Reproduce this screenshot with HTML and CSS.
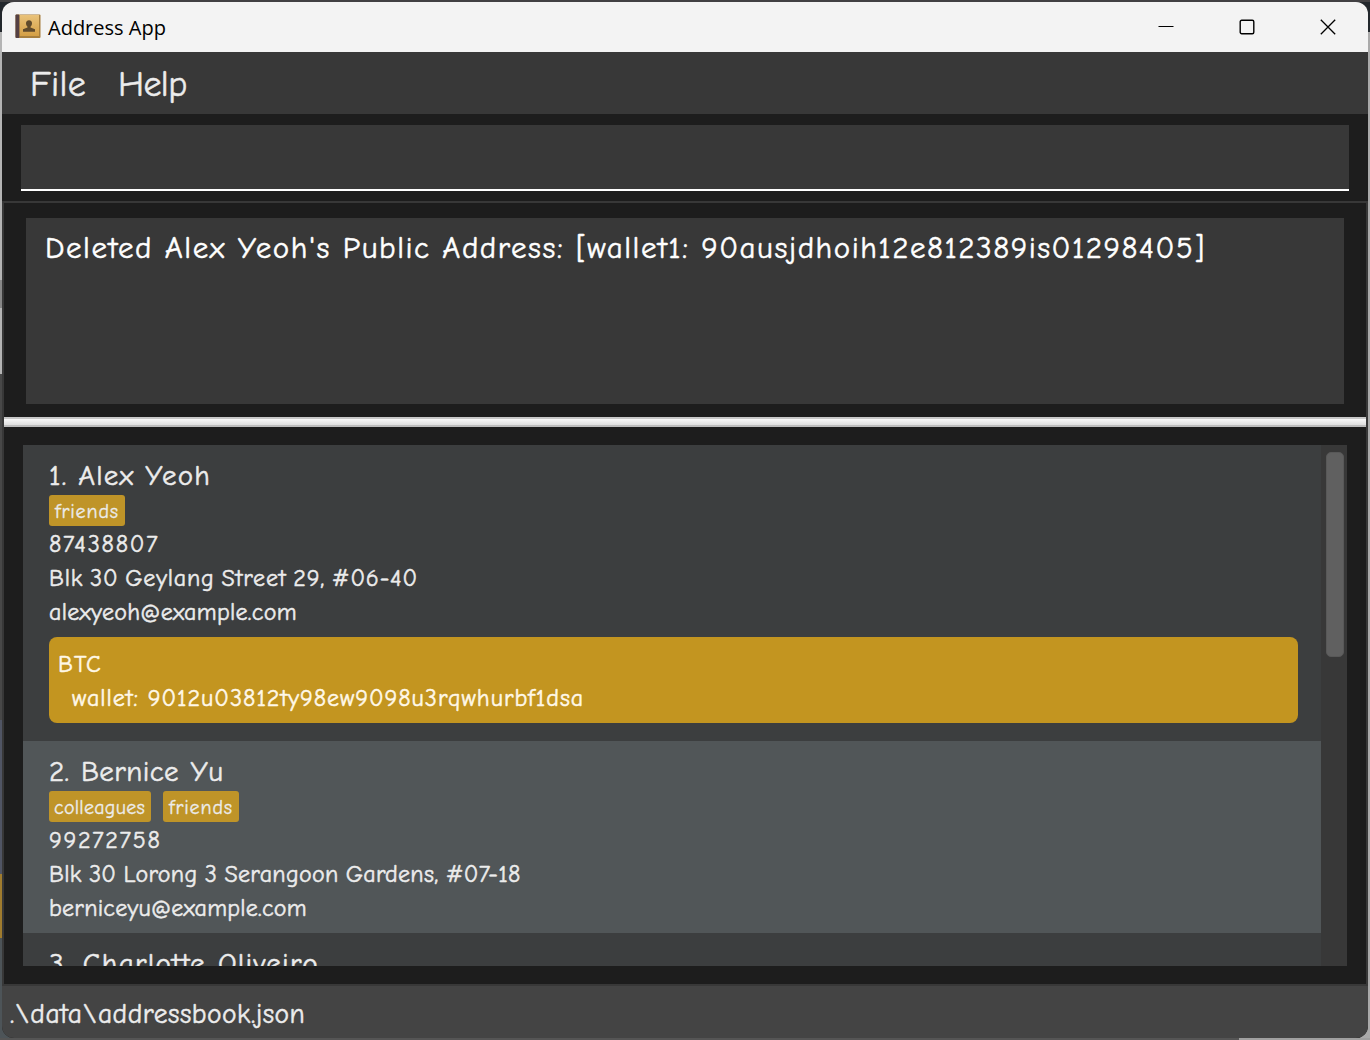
FILE: index.html
```html
<!DOCTYPE html>
<html lang="en">
<head>
<meta charset="utf-8">
<title>Address App</title>
<link rel="stylesheet" href="styles.css">
</head>
<body>
<div class="window">
  <header class="titlebar">
    <svg class="app-icon" width="26" height="25" viewBox="0 0 26 25">
      <defs><linearGradient id="cover" x1="0" y1="0" x2="0" y2="1"><stop offset="0" stop-color="#e9c27a"/><stop offset="1" stop-color="#d49f45"/></linearGradient></defs>
      <rect x="0.5" y="0.5" width="25" height="23.5" rx="1" fill="#a77f3e"/>
      <rect x="4.5" y="1" width="19.5" height="21" fill="url(#cover)"/>
      <rect x="0.5" y="0.5" width="3.8" height="23.5" rx="1" fill="#544044"/>
      <path d="M14 6.200c2 0 3 1.300 3 3.100 0 1.500-.6 2.700-1.500 3.400v.8l4.500 1.700v2.600H8v-2.600l4.500-1.700v-.8C11.600 12 11 10.800 11 9.300c0-1.800 1-3.100 3-3.100z" fill="#5f4a2c"/>
    </svg>
    <span class="title">Address App</span>
    <div class="controls">
      <svg width="16" height="16" viewBox="0 0 16 16"><path d="M0.500 7.500h15" stroke="#000"/></svg>
      <svg width="16" height="16" viewBox="0 0 16 16"><rect x="1.200" y="1.200" width="13.600" height="13.600" rx="1.500" fill="none" stroke="#000" stroke-width="1.400"/></svg>
      <svg width="16" height="16" viewBox="0 0 16 16"><path d="M0.800 0.800l14.400 14.400M15.200 0.800L0.800 15.200" stroke="#000" stroke-width="1.300"/></svg>
    </div>
  </header>
  <nav class="menubar"><span class="menu-file">File</span><span class="menu-help">Help</span></nav>
  <section class="command"><div class="command-field"></div></section>
  <main class="panes">
    <section class="result"><div class="result-text"><span class="message">Deleted Alex Yeoh's Public Address: [wallet1: 90ausjdhoih12e812389is01298405]</span></div></section>
    <div class="divider"></div>
    <section class="people">
      <div class="list">
        <article class="person">
          <h2><span class="n1">1. Alex Yeoh</span></h2>
          <div class="tags"><span class="tag friends">friends</span></div>
          <p><span class="phone">87438807</span></p>
          <p><span class="addr1">Blk 30 Geylang Street 29, #06-40</span></p>
          <p><span class="mail1">alexyeoh@example.com</span></p>
          <div class="wallets"><p><span class="coin">BTC</span></p><p class="wallet"><span class="key">wallet: 9012u03812ty98ew9098u3rqwhurbf1dsa</span></p></div>
        </article>
        <article class="person even">
          <h2><span class="n2">2. Bernice Yu</span></h2>
          <div class="tags"><span class="tag colleagues">colleagues</span><span class="tag friends">friends</span></div>
          <p><span class="phone">99272758</span></p>
          <p><span class="addr2">Blk 30 Lorong 3 Serangoon Gardens, #07-18</span></p>
          <p><span class="mail2">berniceyu@example.com</span></p>
        </article>
        <article class="person"><h2><span class="n3">3. Charlotte Oliveiro</span></h2></article>
      </div>
      <div class="scrollbar"><div class="thumb"></div></div>
    </section>
  </main>
  <footer class="status"><span class="path">.\data\addressbook.json</span></footer>
</div>
</body>
</html>
```
FILE: styles.css
```css
* { box-sizing: border-box; }
body {
  margin: 0;
  width: 1370px;
  height: 1040px;
  padding: 2px;
  overflow: hidden;
  background:
    linear-gradient(#414042, #414042) 0 0 / 1370px 2px no-repeat,
    linear-gradient(90deg, #555 0 1239px, #a0a0a0 1239px) 0 1038px / 1370px 2px no-repeat,
    linear-gradient(#22272c 0 32px, #b4b4b4 32px 280px, #888 280px 308px, #b4b4b4 308px 374px, #484848 374px 720px, #505564 720px 874px, #a07c2e 874px 938px, #4d5458 938px) 0 0 / 10px 1040px no-repeat,
    linear-gradient(#22272c 0 32px, #aaa 32px) 1360px 0 / 10px 1040px no-repeat,
    #555;
  font-family: "Comic Sans MS", "Comic Neue", "Open Sans", sans-serif;
  font-variant-ligatures: none;
  font-feature-settings: "liga" 0, "clig" 0, "calt" 0, "dlig" 0;
  -webkit-text-stroke-width: 0.5px;
  color: #ececec;
}
h2, p { margin: 0; font-weight: 400; white-space: nowrap; }
.window {
  width: 1366px;
  height: 1036px;
  display: flex;
  flex-direction: column;
  overflow: hidden;
  border-radius: 12px;
  background: #1d1d1d;
}
.titlebar {
  flex: 0 0 50px;
  display: flex;
  align-items: center;
  padding: 0 32.5px 0 13px;
  background: #f3f3f3;
  color: #000;
  -webkit-text-stroke-width: 0;
}
.app-icon { margin-bottom: 1px; }
.title { margin: 2px 0 0 7px; font: 20px/28px "Segoe UI", "Open Sans", sans-serif; }
.controls { display: flex; gap: 65px; margin-left: auto; padding-bottom: 1px; }
.controls svg { display: block; }
.menubar {
  flex: 0 0 62px;
  display: flex;
  gap: 32px;
  height: 62px;
  padding: 2px 28px 0;
  background: #383838;
  font-size: 36px;
  line-height: 62px;
}
.menu-file { width: 56px; letter-spacing: 0.3px; }
.menu-help { letter-spacing: -0.6px; }
.command { flex: 0 0 87px; padding: 11px 19px 10px; }
.command-field { height: 66px; background: #383838; border-bottom: 2px solid #fff; }
.panes {
  flex: 0 0 785px;
  min-height: 0;
  height: 785px;
  display: flex;
  flex-direction: column;
  border: 2px solid #383838;
}
.result { flex: 0 0 214px; padding: 15px 22px 13px; }
.result-text {
  height: 186px;
  padding: 10px 19px;
  background: #383838;
  color: #fff;
  font-size: 31px;
  line-height: 40px;
  white-space: nowrap;
}
.message { letter-spacing: 1.52px; }
.divider {
  flex: 0 0 10px;
  background: linear-gradient(#c8c8c8 0 2px, #f8f8f8 2px, #dedede 8px, #bdbdbd 8px);
}
.people { flex: 1 1 0; display: flex; padding: 18px 19px; min-height: 0; }
.list { width: 1298px; overflow: hidden; background: #3c3e3f; }
.person { padding: 12px 23px 8px 26px; background: #3c3e3f; font-size: 24px; line-height: 34px; }
.person.even { background: #515658; }
.person h2 { height: 38px; font-size: 29px; line-height: 38px; }
.person p { height: 34px; }
.n1 { letter-spacing: 1.2px; }
.n2 { letter-spacing: 0.4px; word-spacing: 1.5px; }
.n3 { letter-spacing: 1.3px; word-spacing: 1px; }
.phone { letter-spacing: 1.75px; }
.addr1 { letter-spacing: 0.82px; word-spacing: -2px; }
.addr2 { letter-spacing: 0.29px; word-spacing: -1px; }
.mail1 { letter-spacing: 0.3px; }
.mail2 { letter-spacing: 0.25px; }
.coin { letter-spacing: 1px; }
.key { letter-spacing: 0.97px; }
.tags { display: flex; gap: 12px; height: 32px; }
.tag {
  height: 31px;
  padding: 0 5px;
  border-radius: 3px;
  background: #bf9428;
  font-size: 20px;
  line-height: 33px;
  white-space: nowrap;
  -webkit-text-stroke-width: 0.3px;
}
.tag.friends { width: 76px; padding-left: 6px; letter-spacing: 0.85px; }
.tag.colleagues { width: 102px; letter-spacing: 0.25px; }
.wallets {
  height: 86px;
  margin: 8px 0 10px;
  padding: 10px 9px;
  border-radius: 8px;
  background: #c39520;
  color: #fff8e8;
}
.wallet { padding-left: 14px; }
.scrollbar { width: 26px; padding: 7px 3px 0 5px; background: #383838; }
.thumb { height: 205px; border: 1px solid #585858; border-radius: 5px; background: #606060; }
.status {
  flex: 0 0 52px;
  padding: 0 8px;
  background: #444;
  font-size: 27.5px;
  line-height: 57px;
}
.path { letter-spacing: 0.5px; }
```
